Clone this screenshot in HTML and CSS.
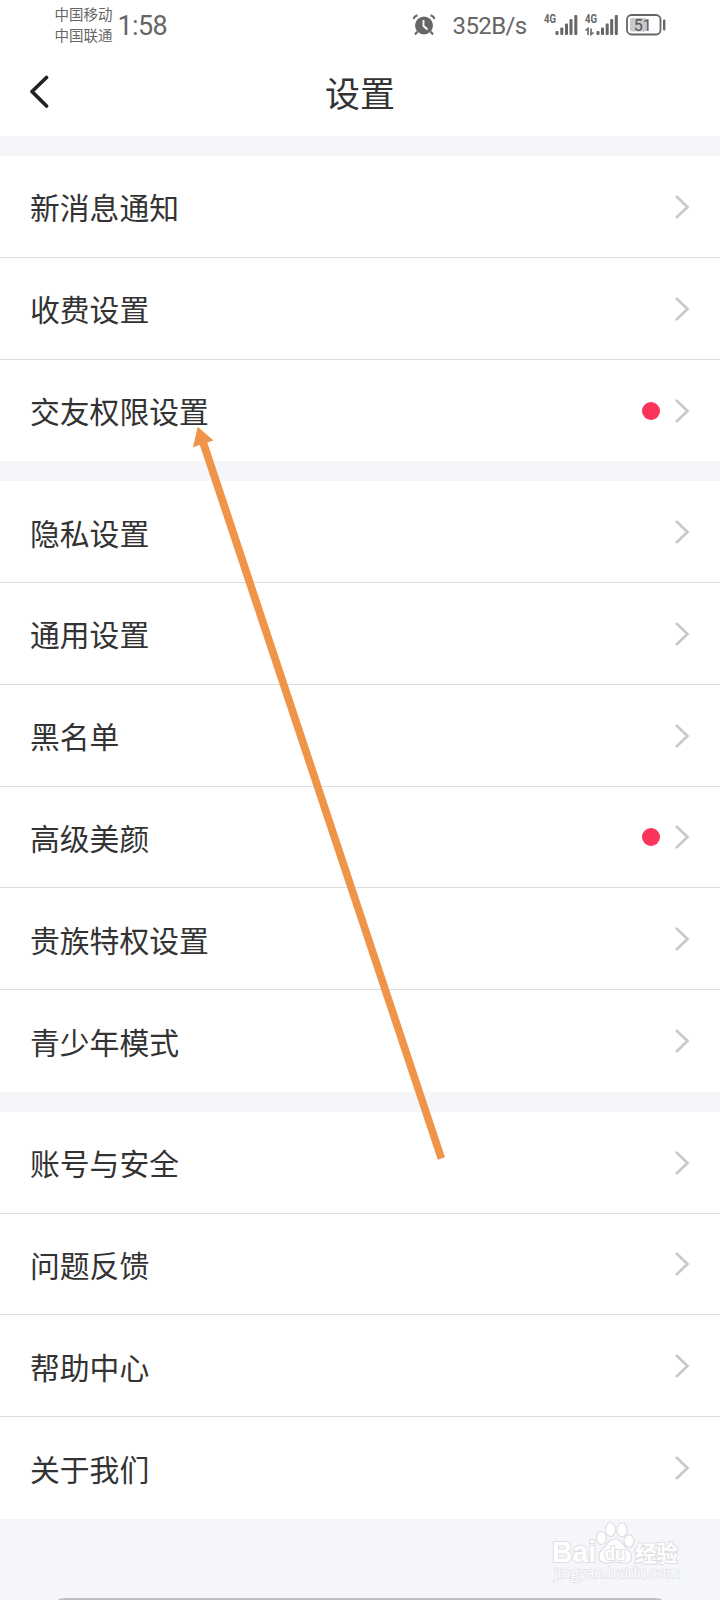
FILE: index.html
```html
<!DOCTYPE html>
<html lang="zh-CN">
<head>
  <meta charset="utf-8">
  <title>设置</title>
  <link rel="stylesheet" href="styles.css">
</head>
<body>

<!-- shared icons -->
<svg class="defs">
  <symbol id="chevron" viewBox="0 0 16 26">
    <path d="M2 2L13.5 13L2 24" fill="none" stroke="#c8c8c8" stroke-width="2.6"/>
  </symbol>
</svg>

<div class="screen">
  <header>
    <div class="status-bar">
      <div class="carriers">
        <span>中国移动</span>
        <span>中国联通</span>
      </div>
      <span class="time">1:58</span>
      <svg class="alarm" viewBox="0 0 24 22">
        <circle cx="12" cy="11.5" r="9" fill="#666"/>
        <path d="M1.5 5Q2.5 2 5.5 1.2M22.5 5Q21.5 2 18.5 1.2M5.5 17.5L3 20.5M18.5 17.5L21 20.5" fill="none" stroke="#666" stroke-width="2"/>
        <path d="M11.5 6V12L15.5 15.5" fill="none" stroke="#fff" stroke-width="1.8"/>
      </svg>
      <span class="speed">352B/s</span>
      <svg class="signals" viewBox="0 0 76 24">
        <g fill="#666">
          <text x="0" y="9.5" textLength="12" lengthAdjust="spacingAndGlyphs">4G</text>
          <rect x="11.5" y="18" width="3" height="4" rx="1"/>
          <rect x="16.3" y="14.5" width="3" height="7.5" rx="1"/>
          <rect x="21" y="10.5" width="3" height="11.5" rx="1"/>
          <rect x="25.5" y="6" width="3" height="16" rx="1"/>
          <rect x="30.3" y="2" width="3" height="20" rx="1"/>
          <text x="41" y="9.5" textLength="12" lengthAdjust="spacingAndGlyphs">4G</text>
          <rect x="52.5" y="18" width="3" height="4" rx="1"/>
          <rect x="57" y="14.5" width="3" height="7.5" rx="1"/>
          <rect x="61.7" y="10.5" width="3" height="11.5" rx="1"/>
          <rect x="66.2" y="6" width="3" height="16" rx="1"/>
          <rect x="70.8" y="2" width="3" height="20" rx="1"/>
        </g>
        <path d="M41.5 17.5L44 15.5V22M47 15.5V21.5L49.5 19.5" fill="none" stroke="#666" stroke-width="1.6"/>
      </svg>
      <svg class="battery" viewBox="0 0 42 22">
        <rect x="1" y="1" width="33.5" height="19.5" rx="4.5" fill="none" stroke="#666" stroke-width="1.8"/>
        <rect x="4" y="4" width="17" height="13.5" rx="2" fill="#c8c8c8"/>
        <rect x="37" y="5.5" width="2.4" height="11" rx="1" fill="#666"/>
        <text x="16.8" y="16.5" text-anchor="middle" fill="#555">51</text>
      </svg>
    </div>
    <div class="title-bar">
      <svg class="back" viewBox="0 0 22 34">
        <path d="M18.5 2.5L4 16.5L18.5 31" fill="none" stroke="#222" stroke-width="3.7" stroke-linecap="round" stroke-linejoin="round"/>
      </svg>
      <h1>设置</h1>
    </div>
  </header>

  <ul class="group">
    <li><span>新消息通知</span><svg class="chevron"><use href="#chevron"/></svg></li>
    <li><span>收费设置</span><svg class="chevron"><use href="#chevron"/></svg></li>
    <li><span>交友权限设置</span><i class="dot"></i><svg class="chevron"><use href="#chevron"/></svg></li>
  </ul>

  <ul class="group">
    <li><span>隐私设置</span><svg class="chevron"><use href="#chevron"/></svg></li>
    <li><span>通用设置</span><svg class="chevron"><use href="#chevron"/></svg></li>
    <li><span>黑名单</span><svg class="chevron"><use href="#chevron"/></svg></li>
    <li><span>高级美颜</span><i class="dot"></i><svg class="chevron"><use href="#chevron"/></svg></li>
    <li><span>贵族特权设置</span><svg class="chevron"><use href="#chevron"/></svg></li>
    <li><span>青少年模式</span><svg class="chevron"><use href="#chevron"/></svg></li>
  </ul>

  <ul class="group">
    <li><span>账号与安全</span><svg class="chevron"><use href="#chevron"/></svg></li>
    <li><span>问题反馈</span><svg class="chevron"><use href="#chevron"/></svg></li>
    <li><span>帮助中心</span><svg class="chevron"><use href="#chevron"/></svg></li>
    <li><span>关于我们</span><svg class="chevron"><use href="#chevron"/></svg></li>
  </ul>

  <div class="next-card"></div>

  <!-- arrow pointing at the third row -->
  <svg class="arrow" viewBox="0 0 260 740">
    <path d="M12.7 6.7L28.5 20.5L22.3 22.6L260 737.2L252.8 739.8L14.8 25L8 27.2Z" fill="#f0944a"/>
  </svg>

  <!-- watermark -->
  <svg class="watermark" viewBox="0 0 136 66">
    <g fill="#fff" stroke="#dedfe3" stroke-width="1.2">
      <text class="wm-logo" x="2" y="42" textLength="44" lengthAdjust="spacingAndGlyphs">Bai</text>
      <ellipse cx="51.5" cy="18" rx="5" ry="6.5"/>
      <ellipse cx="60.5" cy="9.5" rx="5" ry="7"/>
      <ellipse cx="72" cy="10" rx="5" ry="7"/>
      <ellipse cx="79" cy="21" rx="5" ry="6.3"/>
      <path d="M65 19C58 19 57 26 52 30C47 34 48 43 56 43C60 43 62 42 65 42C68 42 71 43 75 43C82 43 84 35 78 30C73 26 72 19 65 19Z"/>
      <text class="wm-du" x="54.5" y="39.5" textLength="21" lengthAdjust="spacingAndGlyphs">du</text>
      <text class="wm-cn" x="85" y="40.5" textLength="43">经验</text>
      <text class="wm-url" x="4" y="58" textLength="126" lengthAdjust="spacingAndGlyphs">jingyan.baidu.com</text>
    </g>
  </svg>
</div>

</body>
</html>
```
FILE: styles.css
```css
* {
  box-sizing: border-box;
}
body {
  margin: 0;
  background: #f5f6fa;
  color: #333;
  font-family: Roboto, "Noto Sans CJK SC", sans-serif;
}
.defs {
  display: none;
}
.screen {
  position: relative;
  width: 720px;
  height: 1600px;
  overflow: hidden;
}

/* header */
header {
  height: 136px;
  background: #fff;
}
.status-bar {
  display: flex;
  align-items: center;
  height: 49px;
  padding-left: 54.5px;
  color: #666;
}
.carriers {
  display: flex;
  flex-direction: column;
  width: 63px;
  padding-top: 2px;
  font-size: 14.5px;
  line-height: 21px;
}
.time {
  width: 294px;
  padding-top: 2px;
  font-size: 27px;
  letter-spacing: -0.6px;
}
.alarm {
  width: 24px;
  height: 22px;
}
.speed {
  width: 91px;
  margin-left: 17px;
  padding-top: 3px;
  font-size: 24px;
  letter-spacing: -0.6px;
}
.signals {
  width: 76px;
  height: 24px;
}
.signals text {
  font-size: 12px;
  font-weight: bold;
}
.battery {
  width: 42px;
  height: 22px;
  margin-left: 6px;
}
.battery text {
  font-size: 16px;
}
.title-bar {
  display: grid;
  grid-template-columns: 60px 1fr 60px;
  align-items: center;
  height: 87px;
}
.back {
  width: 22px;
  height: 34px;
  margin: 0 0 1px 28px;
}
h1 {
  margin: 0;
  padding-top: 7px;
  font-size: 35px;
  font-weight: 400;
  line-height: 50px;
  text-align: center;
}

/* list */
.group {
  margin: 20px 0 0;
  padding: 0;
  background: #fff;
  list-style: none;
}
.group li {
  display: flex;
  align-items: center;
  height: 101.75px;
  padding: 1px 30px 0;
  font-size: 29.8px;
}
.group li:not(:last-child) {
  border-bottom: 1px solid #dcdcdc;
}
.group span {
  flex: 1;
  padding-bottom: 1px;
}
.dot {
  width: 18px;
  height: 18px;
  margin-right: 14px;
  border-radius: 50%;
  background: #fb3459;
}
.chevron {
  width: 16px;
  height: 26px;
}

/* top edge of the sheet under the list */
.next-card {
  height: 40px;
  margin: 79.5px 49px 0;
  border-radius: 16px;
  background: #bfbfbf;
}

.arrow {
  position: absolute;
  top: 420px;
  left: 185px;
  width: 260px;
  height: 740px;
}
.watermark {
  position: absolute;
  top: 1520px;
  left: 550px;
  width: 136px;
  height: 66px;
}
.watermark text {
  paint-order: stroke;
  stroke-width: 2px;
}
.wm-logo {
  font-family: "Liberation Sans", sans-serif;
  font-size: 29px;
  font-weight: bold;
}
.wm-du {
  font-size: 19px;
  font-weight: bold;
}
.wm-cn {
  font-size: 21.5px;
  font-weight: bold;
}
.watermark .wm-url {
  font-family: "Open Sans", sans-serif;
  font-size: 14px;
  stroke-width: 1.4px;
}
```
